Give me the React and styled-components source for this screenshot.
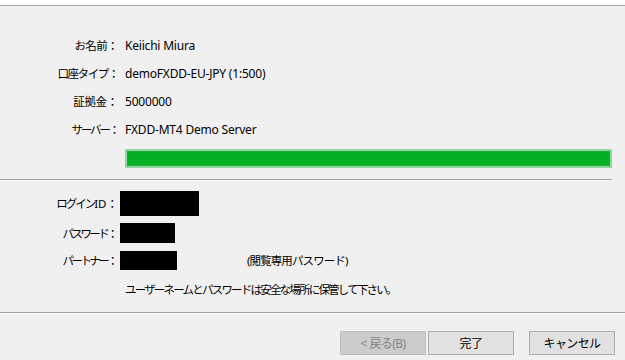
import React from "react";
import styled, { createGlobalStyle } from "styled-components";

const Global = createGlobalStyle`
  html, body { margin: 0; padding: 0; background: #f0f0f0; }
  body {
    font-family: "Noto Sans", "Noto Sans CJK JP", sans-serif;
    font-size: 12px;
    color: #000;
  }
`;

const Dialog = styled.div`
  width: 625px;
  height: 360px;
  display: flex;
  flex-direction: column;
  background: #f0f0f0;
  overflow: hidden;
`;

const Header = styled.div`
  height: 5px;
  background: #ffffff;
  border-bottom: 1px solid #a0a0a0;
  flex: none;
`;

const Body = styled.div`
  flex: 1;
  display: flex;
  flex-direction: column;
  padding-top: 25px;
`;

const InfoGrid = styled.div`
  display: grid;
  grid-template-columns: 118px 1fr;
  grid-auto-rows: 28px;
  column-gap: 7px;
  align-items: center;
`;

const Label = styled.div`
  text-align: right;
  white-space: nowrap;
  font-size: 11.5px;
  letter-spacing: ${(p) => p.$ls}px;
`;

const Value = styled.div`
  white-space: nowrap;
  letter-spacing: -0.2px;
`;

const Progress = styled.div`
  margin: 6px 13px 0 125px;
  height: 19px;
  box-sizing: border-box;
  border: 1px solid #8fd69b;
  padding: 1px;
  background: #8fd69b;
`;

const ProgressFill = styled.div`
  height: 100%;
  background: #06b025;
  box-shadow: inset 0 0 0 1px #23a63a;
`;

const Separator = styled.div`
  height: 1px;
  background: #a0a0a0;
  border-bottom: 1px solid #ffffff;
  margin-top: ${(p) => p.$top}px;
  width: ${(p) => p.$width || "100%"};
  flex: none;
`;

const CredGrid = styled.div`
  display: grid;
  grid-template-columns: 116px auto auto 1fr;
  column-gap: 4px;
  margin-top: 7px;
  align-items: center;
`;

const CredRow = styled.div`
  display: contents;
`;

const CredCell = styled.div`
  height: ${(p) => p.$h}px;
  display: flex;
  align-items: center;
`;

const CredLabel = styled(CredCell)`
  justify-content: flex-end;
  white-space: nowrap;
  font-size: 11.5px;
  letter-spacing: ${(p) => p.$ls}px;
`;

const Latin = styled.span`
  letter-spacing: 0;
`;

const Redacted = styled.div`
  background: #000;
  width: ${(p) => p.$w}px;
  height: ${(p) => p.$bh}px;
`;

const Hint = styled(CredCell)`
  padding-left: 44px;
  white-space: nowrap;
  font-size: 11.5px;
  letter-spacing: -0.9px;
`;

const Note = styled.div`
  margin-left: 125px;
  height: 34px;
  display: flex;
  align-items: center;
  white-space: nowrap;
  font-size: 11.5px;
  letter-spacing: -1.8px;
`;

const ButtonBar = styled.div`
  display: flex;
  justify-content: flex-end;
  align-items: center;
  padding: 17px 10px 0 0;
  gap: 2px;
`;

const Button = styled.button`
  width: 86px;
  height: 24px;
  box-sizing: border-box;
  margin-left: ${(p) => p.$gap || 0}px;
  font-family: inherit;
  font-size: 12px;
  padding: 0;
  border: 1px solid ${(p) => (p.disabled ? "#bfbfbf" : "#adadad")};
  background: ${(p) => (p.disabled ? "#cccccc" : "#e1e1e1")};
  color: ${(p) => (p.disabled ? "#838383" : "#000")};
  letter-spacing: -0.6px;
`;

const info = [
  ["お名前：", "Keiichi Miura", -0.6],
  ["口座タイプ：", "demoFXDD-EU-JPY (1:500)", -1.4],
  ["証拠金：", "5000000", -0.3],
  ["サーバー：", "FXDD-MT4 Demo Server", -2.2],
];

const creds = [
  { label: ["ログイン", "ID", "："], w: 79, h: 30, bh: 25, hint: "", ls: -2 },
  { label: ["パスワード："], w: 55, h: 30, bh: 20, hint: "", ls: -2.6 },
  { label: ["パートナー："], w: 57, h: 24, bh: 19, hint: "(閲覧専用パスワード)", ls: -2.6 },
];

export default function App() {
  return (
    <Dialog>
      <Global />
      <Header />
      <Body>
        <InfoGrid>
          {info.map(([l, v, ls]) => (
            <React.Fragment key={l}>
              <Label $ls={ls}>{l}</Label>
              <Value>{v}</Value>
            </React.Fragment>
          ))}
        </InfoGrid>
        <Progress>
          <ProgressFill />
        </Progress>
        <Separator $top={11} $width="612px" />
        <CredGrid>
          {creds.map((c) => (
            <CredRow key={c.label.join("")}>
              <CredLabel $h={c.h} $ls={c.ls}>
                {c.label[0]}
                {c.label[1] && <Latin>{c.label[1]}</Latin>}
                {c.label[2]}
              </CredLabel>
              <CredCell $h={c.h}>
                <Redacted $w={c.w} $bh={c.bh} />
              </CredCell>
              <Hint $h={c.h}>{c.hint}</Hint>
              <div />
            </CredRow>
          ))}
        </CredGrid>
        <Note>ユーザーネームとパスワードは安全な場所に保管して下さい。</Note>
        <Separator $top={6} />
        <ButtonBar>
          <Button disabled>&lt; 戻る(B)</Button>
          <Button>完了</Button>
          <Button $gap={13}>キャンセル</Button>
        </ButtonBar>
      </Body>
    </Dialog>
  );
}
